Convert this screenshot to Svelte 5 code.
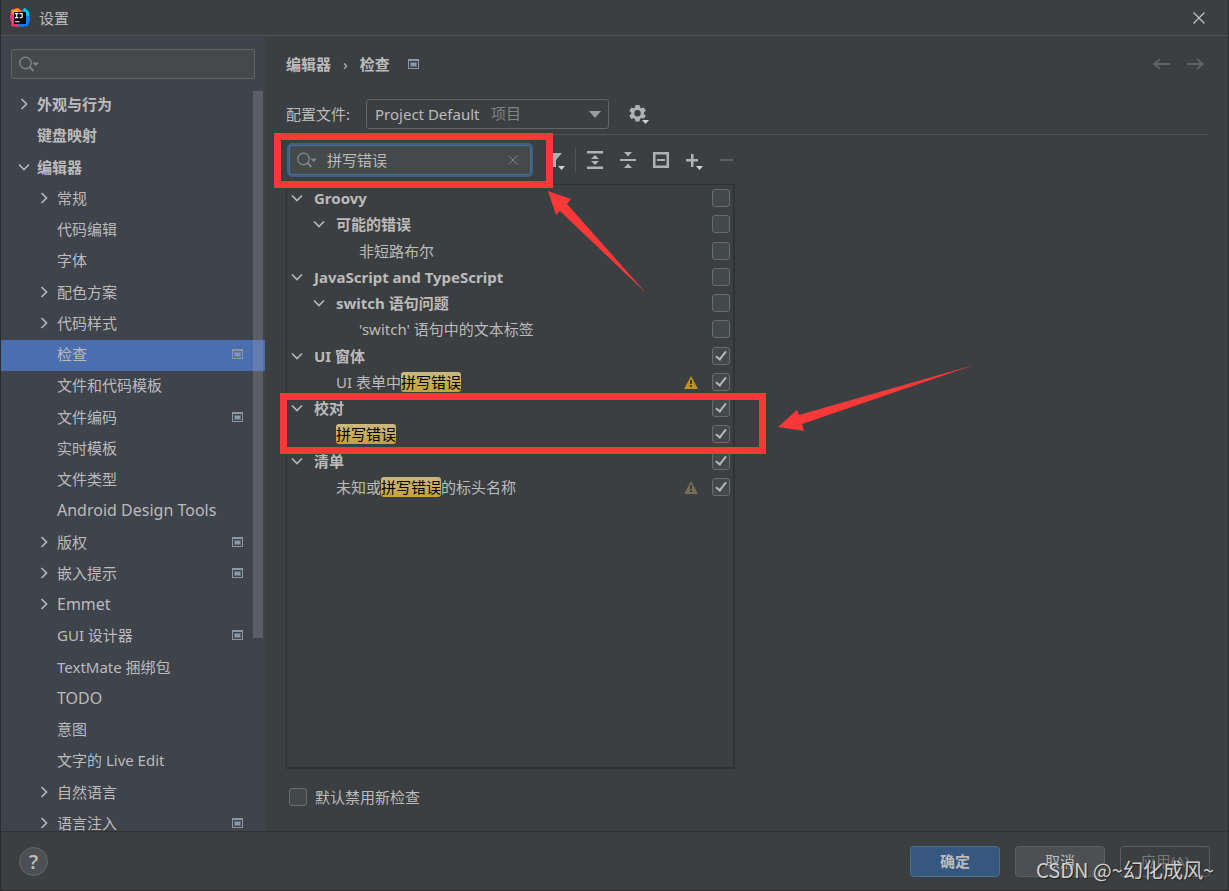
<script>
	let sections = [
		{ name: '外观与行为', level: 0, arrow: 'right' },
		{ name: '键盘映射', level: 0 },
		{ name: '编辑器', level: 0, arrow: 'down' },
		{ name: '常规', level: 1, arrow: 'right' },
		{ name: '代码编辑', level: 1 },
		{ name: '字体', level: 1 },
		{ name: '配色方案', level: 1, arrow: 'right' },
		{ name: '代码样式', level: 1, arrow: 'right' },
		{ name: '检查', level: 1, project: true },
		{ name: '文件和代码模板', level: 1 },
		{ name: '文件编码', level: 1, project: true },
		{ name: '实时模板', level: 1 },
		{ name: '文件类型', level: 1 },
		{ name: 'Android Design Tools', level: 1, latin: true },
		{ name: '版权', level: 1, arrow: 'right', project: true },
		{ name: '嵌入提示', level: 1, arrow: 'right', project: true },
		{ name: 'Emmet', level: 1, arrow: 'right', latin: true },
		{ name: 'GUI 设计器', level: 1, project: true },
		{ name: 'TextMate 捆绑包', level: 1 },
		{ name: 'TODO', level: 1, latin: true },
		{ name: '意图', level: 1 },
		{ name: '文字的 Live Edit', level: 1 },
		{ name: '自然语言', level: 1, arrow: 'right' },
		{ name: '语言注入', level: 1, arrow: 'right', project: true }
	];

	let inspections = [
		{ name: 'Groovy', level: 0, group: true, checked: false },
		{ name: '可能的错误', level: 1, group: true, checked: false },
		{ name: '非短路布尔', level: 2, checked: false },
		{ name: 'JavaScript and TypeScript', level: 0, group: true, checked: false },
		{ name: 'switch 语句问题', level: 1, group: true, checked: false },
		{ name: "'switch' 语句中的文本标签", level: 2, checked: false },
		{ name: 'UI 窗体', level: 0, group: true, checked: true },
		{ name: 'UI 表单中拼写错误', level: 1, checked: true, severity: 'warning' },
		{ name: '校对', level: 0, group: true, checked: true },
		{ name: '拼写错误', level: 1, checked: true },
		{ name: '清单', level: 0, group: true, checked: true },
		{ name: '未知或拼写错误的标头名称', level: 1, checked: true, severity: 'weak' }
	];

	let selected = '检查';
	let sectionQuery = '';
	let query = '拼写错误';
	let disableNew = false;

	// split a name into plain and highlighted pieces
	function pieces(name, q) {
		const at = q ? name.indexOf(q) : -1;
		if (at < 0) return [name, '', ''];
		return [name.slice(0, at), q, name.slice(at + q.length)];
	}
</script>

{#snippet projectIcon()}
	<svg class="project-icon" width="11" height="10" viewBox="0 0 11 10" aria-hidden="true">
		<path d="M0 0h11v10H0z M1 2v7h9V2z" fill="#8b98a3" fill-rule="evenodd" />
		<path d="M2 3h7v5H2z" fill="#8b98a3" opacity="0.5" />
		<path d="M3 4h5v3H3z" fill="#8b98a3" />
	</svg>
{/snippet}

{#snippet chevron(dir)}
	<svg class="chevron" width="12" height="12" viewBox="0 0 12 12" aria-hidden="true">
		{#if dir === 'down'}
			<path d="M1 3.5 6 8.5 11 3.5" />
		{:else if dir === 'right'}
			<path d="M3.500 1 8.500 6 3.500 11" />
		{/if}
	</svg>
{/snippet}

{#snippet searchIcon()}
	<svg width="21" height="16" viewBox="0 0 21 16" aria-hidden="true">
		<circle cx="6.500" cy="7" r="5.700" fill="none" stroke="#7a858c" stroke-width="1.4" />
		<path d="M10.600 11 14.500 15" stroke="#7a858c" stroke-width="1.8" />
		<path d="M13.500 6.500h6.500l-3.250 3.700z" fill="#7a858c" />
	</svg>
{/snippet}

<div class="window">
	<header class="titlebar">
		<svg width="20" height="20" viewBox="0 0 20 20" aria-hidden="true">
			<path d="M1 2 8 0l5 4-4 15-8-1 1-5-2-4z" fill="#fe315d" />
			<path d="M1 2 8 0l4 3-7 5-3-1z" fill="#fc801d" />
			<path d="M0 8 3 7l3 7-2 3-3-3z" fill="#ff318c" />
			<path d="M3 3 7 1l1 3-4 2z" fill="#fdb60d" />
			<path d="M12 2 15 0l4 4 1 8-2 6-7 1-4-2 7-9z" fill="#087cfa" />
			<path d="m13 1 2-1 4 4v5l-5-4z" fill="#07c3f2" />
			<rect x="4" y="4" width="12" height="12" fill="#080808" />
			<path
				d="M5 5.6h3.4M6.7 5.6v4M5 9.6h3.4M9.6 5.6h2.6v3.2q0 1-1.2 1H9.6M5.2 13.7h4.4"
				fill="none"
				stroke="#fff"
				stroke-width="1.1"
			/>
		</svg>
		<h1>设置</h1>
		<button class="plain close" aria-label="关闭">
			<svg width="12" height="12" viewBox="0 0 12 12">
				<path d="M0.5 0.5 11.5 11.5M11.5 0.5 0.5 11.5" stroke="#c4c4c4" stroke-width="1.2" />
			</svg>
		</button>
	</header>

	<div class="body">
		<aside>
			<div class="search">
				{@render searchIcon()}
				<input type="text" aria-label="搜索设置" bind:value={sectionQuery} />
			</div>
			<ul class="sections">
				{#each sections as s}
					<li class:selected={s.name === selected}>
						<button
							class="plain section level{s.level}"
							class:latin={s.latin}
							on:click={() => (selected = s.name)}
						>
							{@render chevron(s.arrow)}
							<span>{s.name}</span>
							{#if s.project}{@render projectIcon()}{/if}
						</button>
					</li>
				{/each}
			</ul>
			<div class="scrollbar"></div>
		</aside>

		<main>
			<div class="crumbs">
				<a href="#editor">编辑器</a>
				<span class="sep">›</span>
				<h2>检查</h2>
				{@render projectIcon()}
				<div class="history">
					<button class="plain" aria-label="后退">
						<svg width="17" height="12" viewBox="0 0 17 12">
							<path d="M7 1 1.5 6 7 11M1.5 6H17" />
						</svg>
					</button>
					<button class="plain" aria-label="前进">
						<svg width="17" height="12" viewBox="0 0 17 12">
							<path d="M10 1 15.5 6 10 11M15.5 6H0" />
						</svg>
					</button>
				</div>
			</div>

			<div class="profile">
				<label for="profile">配置文件:</label>
				<div class="select">
					<select id="profile">
						<option>Project Default</option>
					</select>
					<span class="scope">项目</span>
					<svg width="12" height="7" viewBox="0 0 12 7" aria-hidden="true">
						<path d="M0 0h12L6 7z" fill="#9a9da0" />
					</svg>
				</div>
				<button class="plain" aria-label="配置文件操作">
					<svg width="20" height="20" viewBox="0 0 20 20">
						<g fill="#afb1b3">
							<path
								fill-rule="evenodd"
								d="M6.500 1h4l.5 2.400 1.500.8 2.300-.8 2 3.400-1.900 1.600v1.600l1.900 1.600-2 3.400-2.300-.8-1.500.8-.5 2.400h-4L6 15l-1.500-.8-2.200.8-2-3.400L2.200 10V8.400L.3 6.800l2-3.400 2.200.8L6 3.400zM8.500 6a3.200 3.200 0 1 0 0 6.400 3.200 3.200 0 0 0 0-6.400z"
							/>
							<path d="M11.500 14.500H20v2L16.500 20z" fill="#3c3f41" />
							<path d="M13 16h7l-3.500 4z" fill="#d0d2d3" />
						</g>
					</svg>
				</button>
			</div>

			<div class="toolbar">
				<div class="search focused">
					{@render searchIcon()}
					<input type="text" aria-label="搜索检查" bind:value={query} />
					<button class="plain" aria-label="清除" on:click={() => (query = '')}>
						<svg width="10" height="10" viewBox="0 0 10 10">
							<path d="M0.500 0.500 9.500 9.500M9.500 0.500 0.500 9.500" stroke="#7f8385" />
						</svg>
					</button>
				</div>
				<button class="plain" aria-label="筛选检查">
					<svg width="20" height="20" viewBox="0 0 20 20">
						<path d="M0 3h16l-6 7v7H6v-7z" fill="#afb1b3" />
						<path d="M11 14h9l-4 6z" fill="#3c3f41" />
						<path d="M12 16h7l-3.500 4z" fill="#d0d2d3" />
					</svg>
				</button>
				<span class="divider"></span>
				<button class="plain" aria-label="全部展开">
					<svg width="20" height="20" viewBox="0 0 20 20">
						<path
							d="M2 1h16v2.500H2zM2 16.500h16V19H2zM10 5l4 4H6zM10 15l4-4H6z"
							fill="#afb1b3"
						/>
					</svg>
				</button>
				<button class="plain" aria-label="全部折叠">
					<svg width="20" height="20" viewBox="0 0 20 20">
						<path d="M2 9h16v2H2zM6 2h8l-4 4.500zM6 18h8l-4-4.500z" fill="#afb1b3" />
					</svg>
				</button>
				<button class="plain" aria-label="重置为空">
					<svg width="20" height="20" viewBox="0 0 20 20">
						<path
							d="M2 2h16v16H2zM4.500 4.500v11h11v-11zM6 9h8v2H6z"
							fill="#afb1b3"
							fill-rule="evenodd"
						/>
					</svg>
				</button>
				<button class="plain" aria-label="添加">
					<svg width="20" height="20" viewBox="0 0 20 20">
						<path d="M7 4h2.500v5H14v2.500H9.500V17H7v-5.500H2V9h5z" fill="#afb1b3" />
						<path d="M12 16h7l-3.500 4z" fill="#d0d2d3" />
					</svg>
				</button>
				<button class="plain" aria-label="移除" disabled>
					<svg width="20" height="20" viewBox="0 0 20 20">
						<path d="M3 9h13v2H3z" fill="#5f6263" />
					</svg>
				</button>
			</div>

			<ul class="inspections">
				{#each inspections as item, i}
					{@const parts = pieces(item.name, query)}
					<li class="level{item.level}" class:group={item.group}>
						{@render chevron(item.group ? 'down' : '')}
						<label for="inspection-{i}">
							{parts[0]}{#if parts[1]}<mark>{parts[1]}</mark>{/if}{parts[2]}
						</label>
						{#if item.severity}
							<svg
								class="severity"
								width="14"
								height="13"
								viewBox="0 0 14 13"
								aria-hidden="true"
							>
								<path d="M7 0 14 13H0z" fill={item.severity === 'weak' ? '#756d56' : '#be9117'} />
								<path d="M6 4h2v4H6zM6 9h2v2H6z" fill="#3c3f41" />
							</svg>
						{/if}
						<input type="checkbox" id="inspection-{i}" bind:checked={item.checked} />
					</li>
				{/each}
			</ul>

			<div class="disable-new">
				<input type="checkbox" id="disable-new" bind:checked={disableNew} />
				<label for="disable-new">默认禁用新检查</label>
			</div>
		</main>
	</div>

	<footer>
		<button class="help" aria-label="帮助">?</button>
		<button class="btn primary">确定</button>
		<button class="btn">取消</button>
		<button class="btn" disabled>应用(A)</button>
	</footer>

	<div class="marker search-marker"></div>
	<div class="marker result-marker"></div>
	<svg class="arrows" width="700" height="250" viewBox="0 0 700 250" aria-hidden="true">
		<path d="M0 1 23 9 19 14 98 103 12 21 8 25z" />
		<path d="M230 237 249 220 251 225 426 175 254 234 256 241z" />
	</svg>
	<div class="watermark">CSDN @~幻化成风~</div>
</div>

<style>
	:global(body) {
		background: #3c3f41;
		color: #bbbbbb;
		font-family: 'Noto Sans', 'Noto Sans CJK SC', sans-serif;
		font-size: 15px;
	}

	.window {
		position: relative;
		display: flex;
		flex-direction: column;
		box-sizing: border-box;
		height: 100vh;
		border: 1px solid #2b2b2b;
		border-top: none;
		overflow: hidden;
		line-height: 20px;
	}

	h1,
	h2,
	ul {
		margin: 0;
		padding: 0;
		font-size: 15px;
		list-style: none;
	}

	button,
	input,
	select {
		margin: 0;
		font: inherit;
		color: inherit;
	}

	svg {
		display: block;
		flex: none;
	}

	.plain {
		padding: 0;
		border: none;
		background: none;
	}

	.titlebar {
		display: flex;
		flex: none;
		align-items: center;
		gap: 9px;
		height: 35px;
		padding: 0 23px 0 9px;
		border-bottom: 1px solid #515456;
	}

	h1 {
		font-weight: 400;
	}

	.close {
		margin-left: auto;
	}

	.body {
		display: flex;
		flex: 1;
		min-height: 0;
	}

	aside {
		position: relative;
		flex: none;
		width: 264px;
		background: #3f434c;
		overflow: hidden;
	}

	.search {
		display: flex;
		align-items: center;
		gap: 9px;
		box-sizing: border-box;
		height: 30px;
		padding: 0 12px 0 7px;
		border: 1px solid #646464;
		border-radius: 3px;
		background: #45494a;
	}

	.search input {
		flex: 1;
		min-width: 0;
		padding: 0;
		border: none;
		outline: none;
		background: none;
	}

	aside .search {
		margin: 13px 10px 11px;
	}

	.sections li {
		height: 31px;
	}

	.sections li:nth-child(4n + 2) {
		height: 32px;
	}

	.section {
		display: flex;
		align-items: center;
		gap: 7px;
		width: 100%;
		height: 28px;
		padding: 0 22px 0 17px;
		text-align: left;
	}

	.section.level0 {
		font-weight: 700;
	}

	.section.level1 {
		padding-left: 37px;
	}

	.latin {
		font-size: 16px;
	}

	.section .project-icon {
		margin-left: auto;
	}

	.selected {
		background: #4b6eaf;
	}

	.chevron path {
		fill: none;
		stroke: #b4b6b8;
		stroke-width: 1.7;
	}

	.scrollbar {
		position: absolute;
		top: 55px;
		right: 2px;
		width: 10px;
		height: 547px;
		background: rgba(166, 166, 166, 0.28);
	}

	main {
		flex: 1;
		min-width: 0;
		padding: 14px 20px 0 21px;
	}

	.crumbs {
		display: flex;
		align-items: center;
		gap: 12px;
		height: 28px;
	}

	.crumbs a {
		color: inherit;
		font-weight: 700;
		text-decoration: none;
	}

	.crumbs .project-icon {
		margin-left: 6px;
	}

	.history {
		display: flex;
		gap: 17px;
		margin: 0 4px 0 auto;
	}

	.history path {
		fill: none;
		stroke: #606263;
		stroke-width: 2;
	}

	.profile {
		display: flex;
		align-items: center;
		gap: 16px;
		height: 30px;
		padding: 21px 0 5px;
		border-bottom: 1px solid #515456;
	}

	.select {
		position: relative;
		margin-right: 4px;
	}

	select {
		display: block;
		width: 243px;
		height: 30px;
		padding: 0 8px;
		border: 1px solid #646464;
		border-radius: 3px;
		background: #3c3f41;
		appearance: none;
	}

	.scope {
		position: absolute;
		top: 4px;
		left: 125px;
		color: #808284;
		pointer-events: none;
	}

	.select svg {
		position: absolute;
		top: 12px;
		right: 8px;
		pointer-events: none;
	}

	.toolbar {
		display: flex;
		align-items: center;
		gap: 13px;
		height: 49px;
	}

	.focused {
		width: 242px;
		height: 30px;
		margin: 0 2px 0 3px;
		border-color: #466d94;
		box-shadow: 0 0 0 2px #3d6185;
	}

	.divider {
		width: 1px;
		height: 24px;
		margin: 0 -4px;
		background: #515456;
	}

	.inspections {
		box-sizing: border-box;
		width: 449px;
		height: 585px;
		border: 1px solid #323232;
		border-width: 1px 2px 2px 1px;
		overflow: hidden;
	}

	.inspections li {
		display: flex;
		align-items: center;
		gap: 11px;
		height: 26px;
		padding: 0 3px 0 4px;
	}

	.inspections li:nth-child(4n + 3) {
		height: 27px;
	}

	.inspections .level1 {
		padding-left: 26px;
	}

	.inspections .level2 {
		padding-left: 49px;
	}

	.group {
		font-weight: 700;
	}

	.inspections label {
		flex: 1;
	}

	mark {
		border-radius: 3px;
		background: linear-gradient(#c9b981, #c8a133);
		color: #000;
	}

	input[type='checkbox'] {
		flex: none;
		width: 18px;
		height: 18px;
		border: 1px solid #6b6b6b;
		border-radius: 3px;
		background: #43494a;
		appearance: none;
	}

	input[type='checkbox']:checked::before {
		content: '';
		display: block;
		width: 4px;
		height: 9px;
		margin: 1px 0 0 5px;
		border: solid #b4b6b7;
		border-width: 0 2px 2px 0;
		transform: rotate(38deg);
	}

	.severity {
		margin-right: 3px;
	}

	.disable-new {
		display: flex;
		align-items: center;
		gap: 8px;
		padding: 18px 0 0 3px;
	}

	footer {
		display: flex;
		flex: none;
		align-items: center;
		gap: 15px;
		height: 58px;
		padding: 0 18px;
		border-top: 1px solid #323232;
	}

	.help {
		width: 29px;
		height: 29px;
		margin-right: auto;
		padding: 0;
		border: 1px solid #646667;
		border-radius: 50%;
		background: #4c5052;
		font-size: 20px;
		font-weight: 600;
		line-height: 27px;
	}

	.btn {
		width: 90px;
		height: 31px;
		padding: 0;
		border: 1px solid #5e6060;
		border-radius: 4px;
		background: #4c5052;
	}

	.btn.primary {
		border-color: #4c708c;
		background: #365880;
		font-weight: 700;
	}

	.btn:disabled {
		background: none;
		color: #777777;
	}

	.marker {
		position: absolute;
		box-sizing: border-box;
		border: 7px solid #fb3838;
		pointer-events: none;
	}

	.search-marker {
		top: 133px;
		left: 273px;
		width: 279px;
		height: 55px;
	}

	.result-marker {
		top: 393px;
		left: 279px;
		width: 486px;
		height: 61px;
	}

	.arrows {
		position: absolute;
		top: 190px;
		left: 547px;
		fill: #fb3838;
		pointer-events: none;
	}

	.watermark {
		position: absolute;
		right: 14px;
		bottom: 8px;
		color: #d0d0d0;
		font-family: 'Noto Sans CJK SC', sans-serif;
		font-size: 20px;
		line-height: 24px;
		text-shadow: 1px 1px 1px #222;
		pointer-events: none;
	}
</style>
